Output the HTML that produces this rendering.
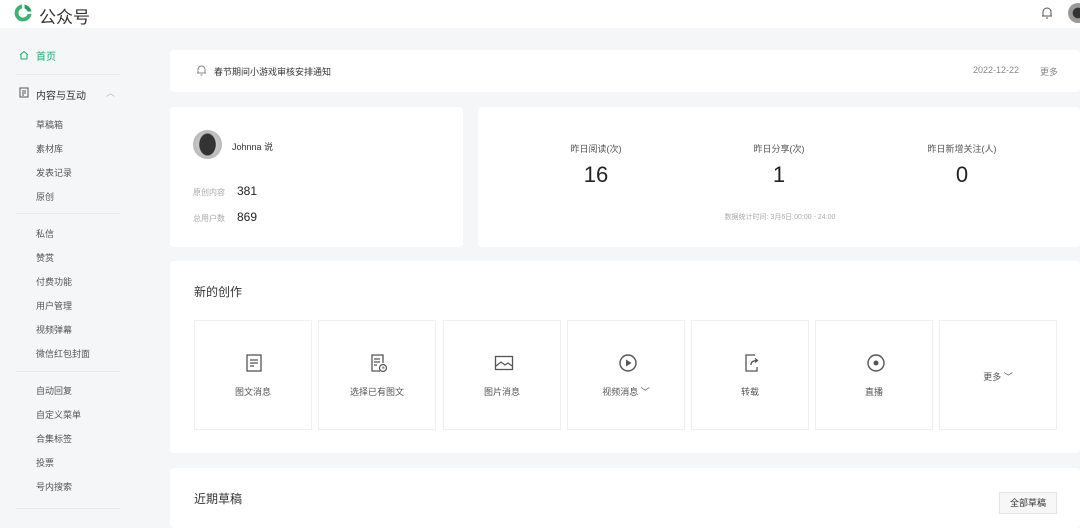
<!DOCTYPE html>
<html><head><meta charset="utf-8"><style>
*{margin:0;padding:0;box-sizing:border-box}
body{width:1080px;height:520px;overflow:hidden;background:#f5f6f7;font-family:"Liberation Sans","Noto Sans CJK SC",sans-serif;color:#333;position:relative}
.a{position:absolute}
.hdr{left:0;top:0;width:1080px;height:28px;background:#fff}
.card{background:#fff;border-radius:4px;position:absolute}
.sb{font-size:9px;color:#555;left:36px}
.sep{left:16px;width:104px;height:1px;background:#e8e9ea}
.tile{position:absolute;top:320px;width:118px;height:110px;border:1px solid #f0f0f0;background:#fff;text-align:center;font-size:9px;color:#555}
.tile svg{position:absolute;left:50px;top:32px}
.tile span{position:absolute;left:0;right:0;top:64px}
.lbl{font-size:9px;color:#555;text-align:center;position:absolute}
.num{font-size:22px;color:#222;text-align:center;position:absolute}
</style></head><body>
<div class="a hdr"></div>
<svg class="a" style="left:12px;top:2px" width="22" height="22" viewBox="0 0 22 22"><path d="M10 2.5A8.5 8.5 0 1 0 19.5 12h-4A4.6 4.6 0 1 1 10 6.5z" fill="#3cb371"/><path d="M12.5 2.5a8.5 8.5 0 0 1 7 7h-4a4.6 4.6 0 0 0-3-3z" fill="#2aa060"/></svg>
<div class="a" style="left:39px;top:3px;font-size:17px;color:#333">公众号</div>
<svg class="a" style="left:1041px;top:6px" width="12" height="13" viewBox="0 0 12 13"><path d="M2 10V6a4 4 0 0 1 8 0v4H2zM1 10h10M5 12h2" fill="none" stroke="#555" stroke-width="1"/></svg>
<div class="a" style="left:1068px;top:3px;width:20px;height:20px;border-radius:50%;background:radial-gradient(circle at 50% 50%,#333 0 35%,#999 40%)"></div>

<svg class="a" style="left:19px;top:50px" width="10" height="10" viewBox="0 0 10 10"><path d="M1 5L5 1.5 9 5M2 4.5V9h6V4.5" fill="none" stroke="#1aad73" stroke-width="1"/></svg>
<div class="a" style="left:36px;top:48px;font-size:10px;color:#1aad73">首页</div>
<div class="a sep" style="top:74px"></div>
<svg class="a" style="left:19px;top:87px" width="10" height="11" viewBox="0 0 10 11"><rect x="1" y="1" width="8" height="9" fill="none" stroke="#555"/><path d="M3 4h4M3 6h4M3 8h2" stroke="#555"/></svg>
<div class="a" style="left:36px;top:87px;font-size:10px;color:#333">内容与互动</div>
<div class="a" style="left:106px;top:86px;font-size:9px;color:#bbb">︿</div>
<div class="a sb" style="top:118px">草稿箱</div>
<div class="a sb" style="top:142px">素材库</div>
<div class="a sb" style="top:166px">发表记录</div>
<div class="a sb" style="top:190px">原创</div>
<div class="a sep" style="top:213px"></div>
<div class="a sb" style="top:227px">私信</div>
<div class="a sb" style="top:251px">赞赏</div>
<div class="a sb" style="top:275px">付费功能</div>
<div class="a sb" style="top:299px">用户管理</div>
<div class="a sb" style="top:323px">视频弹幕</div>
<div class="a sb" style="top:347px">微信红包封面</div>
<div class="a sep" style="top:371px"></div>
<div class="a sb" style="top:384px">自动回复</div>
<div class="a sb" style="top:408px">自定义菜单</div>
<div class="a sb" style="top:432px">合集标签</div>
<div class="a sb" style="top:456px">投票</div>
<div class="a sb" style="top:480px">号内搜索</div>
<div class="a sep" style="top:508px"></div>

<div class="card" style="left:170px;top:50px;width:910px;height:42px"></div>
<svg class="a" style="left:196px;top:64px" width="11" height="12" viewBox="0 0 11 12"><path d="M2 9V5.5a3.5 3.5 0 0 1 7 0V9zM1 9h9M4.5 11h2" fill="none" stroke="#888"/></svg>
<div class="a" style="left:214px;top:65px;font-size:9px;color:#333">春节期间小游戏审核安排通知</div>
<div class="a" style="left:973px;top:65px;font-size:9px;color:#888">2022-12-22</div>
<div class="a" style="left:1040px;top:65px;font-size:9px;color:#888">更多</div>

<div class="card" style="left:170px;top:107px;width:293px;height:140px"></div>
<div class="a" style="left:193px;top:130px;width:29px;height:29px;border-radius:50%;background:radial-gradient(ellipse 30% 40% at 50% 50%,#333 0 90%,transparent 100%),radial-gradient(circle,#ddd,#aaa)"></div>
<div class="a" style="left:232px;top:140px;font-size:9px;color:#333">Johnna 说</div>
<div class="a" style="left:193px;top:187px;font-size:8px;color:#aaa">原创内容</div>
<div class="a" style="left:237px;top:184px;font-size:12px;color:#222">381</div>
<div class="a" style="left:193px;top:213px;font-size:8px;color:#aaa">总用户数</div>
<div class="a" style="left:237px;top:210px;font-size:12px;color:#222">869</div>

<div class="card" style="left:478px;top:107px;width:602px;height:140px"></div>
<div class="lbl" style="left:546px;width:100px;top:142px">昨日阅读(次)</div>
<div class="num" style="left:546px;width:100px;top:162px">16</div>
<div class="lbl" style="left:729px;width:100px;top:142px">昨日分享(次)</div>
<div class="num" style="left:729px;width:100px;top:162px">1</div>
<div class="lbl" style="left:912px;width:100px;top:142px">昨日新增关注(人)</div>
<div class="num" style="left:912px;width:100px;top:162px">0</div>
<div class="a" style="left:680px;width:200px;text-align:center;top:212px;font-size:7px;color:#aaa">数据统计时间: 3月6日 00:00 - 24:00</div>

<div class="card" style="left:170px;top:261px;width:910px;height:192px"></div>
<div class="a" style="left:194px;top:283px;font-size:12px;color:#333">新的创作</div>
<div class="tile" style="left:194px"><svg width="18" height="20" viewBox="0 0 18 20"><rect x="2" y="2" width="14" height="16" fill="none" stroke="#555" stroke-width="1.3"/><path d="M5 7h8M5 10h8M5 13h4" stroke="#555" stroke-width="1.3"/></svg><span>图文消息</span></div>
<div class="tile" style="left:318px"><svg width="20" height="20" viewBox="0 0 20 20"><path d="M11 18H3V2h11v8" fill="none" stroke="#555" stroke-width="1.3"/><path d="M5 6h6M5 9h6M5 12h3" stroke="#555" stroke-width="1.3"/><circle cx="14" cy="15" r="3.5" fill="#fff" stroke="#555" stroke-width="1.2"/><path d="M14 13.5V15h1.5" stroke="#555" fill="none"/></svg><span>选择已有图文</span></div>
<div class="tile" style="left:443px"><svg width="20" height="20" viewBox="0 0 20 20"><rect x="1.5" y="3.5" width="17" height="13" fill="none" stroke="#555" stroke-width="1.3"/><path d="M2 13l5-4 4 3 3-2 4 3" fill="none" stroke="#555" stroke-width="1.2"/></svg><span>图片消息</span></div>
<div class="tile" style="left:567px"><svg width="20" height="20" viewBox="0 0 20 20"><circle cx="10" cy="10" r="8" fill="none" stroke="#555" stroke-width="1.4"/><path d="M8 6.5v7l5.5-3.5z" fill="#555"/></svg><span>视频消息 ﹀</span></div>
<div class="tile" style="left:691px"><svg width="20" height="20" viewBox="0 0 20 20"><path d="M13 2H4v16h11v-4" fill="none" stroke="#555" stroke-width="1.3"/><path d="M9 12c0-3 2-4.5 6-4.5M13 5.5l2.5 2-2.5 2" fill="none" stroke="#555" stroke-width="1.3"/></svg><span>转载</span></div>
<div class="tile" style="left:815px"><svg width="20" height="20" viewBox="0 0 20 20"><circle cx="10" cy="10" r="8" fill="none" stroke="#555" stroke-width="1.4"/><circle cx="10" cy="10" r="2.5" fill="#555"/></svg><span>直播</span></div>
<div class="tile" style="left:939px"><span style="top:49px">更多 ﹀</span></div>

<div class="card" style="left:170px;top:468px;width:910px;height:60px"></div>
<div class="a" style="left:194px;top:490px;font-size:12px;color:#333">近期草稿</div>
<div class="a" style="left:999px;top:492px;width:58px;height:22px;border:1px solid #e5e5e5;background:#f7f7f7;font-size:9px;color:#333;text-align:center;line-height:20px">全部草稿</div>
</body></html>
